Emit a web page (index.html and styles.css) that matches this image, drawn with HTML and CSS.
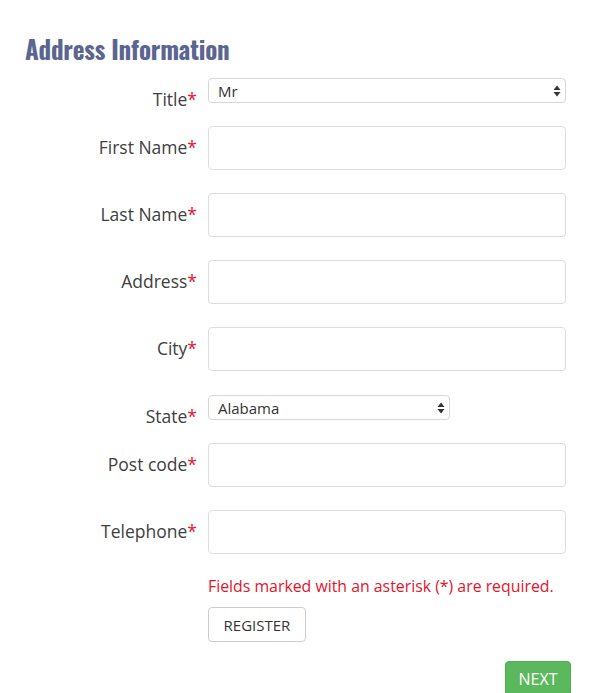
FILE: index.html
```html
<!DOCTYPE html>
<html lang="en">
<head>
<meta charset="utf-8">
<title>Address Information</title>
<link rel="stylesheet" href="styles.css">
</head>
<body>
<div class="page">
  <h2 class="heading">Address Information</h2>
  <form class="form">
    <div class="row row-select row-first">
      <label class="label">Title<span class="req">*</span></label>
      <div class="select-wrap select-full">
        <select class="select"><option>Mr</option><option>Mrs</option><option>Ms</option></select>
        <svg class="arrows" width="8" height="12" viewBox="0 0 8 12"><path d="M4 0.5 L7.5 5 H0.5 Z M4 11.5 L7.5 7 H0.5 Z" fill="#333"/></svg>
      </div>
    </div>
    <div class="row">
      <label class="label">First Name<span class="req">*</span></label>
      <input class="input" type="text">
    </div>
    <div class="row">
      <label class="label">Last Name<span class="req">*</span></label>
      <input class="input" type="text">
    </div>
    <div class="row">
      <label class="label">Address<span class="req">*</span></label>
      <input class="input" type="text">
    </div>
    <div class="row">
      <label class="label">City<span class="req">*</span></label>
      <input class="input" type="text">
    </div>
    <div class="row row-select">
      <label class="label">State<span class="req">*</span></label>
      <div class="select-wrap select-state">
        <select class="select"><option>Alabama</option><option>Alaska</option></select>
        <svg class="arrows" width="8" height="12" viewBox="0 0 8 12"><path d="M4 0.5 L7.5 5 H0.5 Z M4 11.5 L7.5 7 H0.5 Z" fill="#333"/></svg>
      </div>
    </div>
    <div class="row">
      <label class="label">Post code<span class="req">*</span></label>
      <input class="input" type="text">
    </div>
    <div class="row row-last">
      <label class="label">Telephone<span class="req">*</span></label>
      <input class="input" type="text">
    </div>
    <div class="actions">
      <p class="note">Fields marked with an asterisk (*) are required.</p>
      <button type="button" class="btn btn-default">REGISTER</button>
    </div>
    <div class="footer">
      <button type="button" class="btn btn-success">NEXT</button>
    </div>
  </form>
</div>
</body>
</html>
```
FILE: styles.css
```css
html, body {
  margin: 0;
  padding: 0;
  background: #fff;
}
body {
  font-family: "Open Sans", "Liberation Sans", sans-serif;
  color: #333;
  overflow: hidden;
}
.page {
  padding: 33px 0 0 25px;
  width: 546px;
}
.heading {
  margin: 0 0 13px 0;
  font-family: "Oswald", "Liberation Sans Narrow", "DejaVu Sans Condensed", sans-serif;
  font-weight: 700;
  font-stretch: condensed;
  font-size: 25px;
  line-height: 32px;
  color: #5b6592;
  letter-spacing: -0.2px;
}
.form {
  display: flex;
  flex-direction: column;
}
.row {
  display: flex;
  align-items: flex-start;
  gap: 11px;
  margin-bottom: 23px;
}
.row-select {
  margin-top: 1px;
  margin-bottom: 15px;
}
.row-first {
  margin-top: 0;
}
.row-last {
  margin-bottom: 0;
}
.label {
  width: 172px;
  flex: none;
  text-align: right;
  font-size: 17.5px;
  line-height: 24px;
  padding-top: 9px;
  color: #404040;
}
.req {
  color: #e3142c;
}
.input {
  box-sizing: border-box;
  width: 358px;
  height: 44px;
  border: 1px solid #dcdcdc;
  border-radius: 4px;
  background: #fff;
  margin: 0;
  padding: 0 10px;
  font: inherit;
}
.select-wrap {
  position: relative;
  height: 25px;
}
.select-full { width: 358px; }
.select-state { width: 242px; }
.select {
  -webkit-appearance: none;
  appearance: none;
  box-sizing: border-box;
  width: 100%;
  height: 25px;
  margin: 0;
  border: 1px solid #d6d6d6;
  border-radius: 4px;
  background: #fff;
  padding: 0 20px 0 9px;
  font-family: "Open Sans", "Liberation Sans", sans-serif;
  font-size: 15px;
  color: #333;
}
.arrows {
  position: absolute;
  right: 5px;
  top: 7px;
  pointer-events: none;
}
.actions {
  padding-left: 183px;
}
.note {
  margin: 20px 0 9px 0;
  font-size: 15.85px;
  line-height: 24px;
  color: #e3142c;
}
.btn {
  box-sizing: border-box;
  height: 35px;
  border-radius: 4px;
  font-family: "Open Sans", "Liberation Sans", sans-serif;
  font-size: 15px;
  padding: 0 14px;
  cursor: pointer;
  margin: 0;
}
.btn-default {
  width: 98px;
  background: #fff;
  border: 1px solid #cccccc;
  color: #333;
}
.footer {
  display: flex;
  justify-content: flex-end;
  width: 546px;
  margin-top: 19px;
}
.btn-success {
  width: 66px;
  background: #5cb85c;
  border: 1px solid #4cae4c;
  color: #fff;
  font-size: 16px;
  padding: 0;
}
```
